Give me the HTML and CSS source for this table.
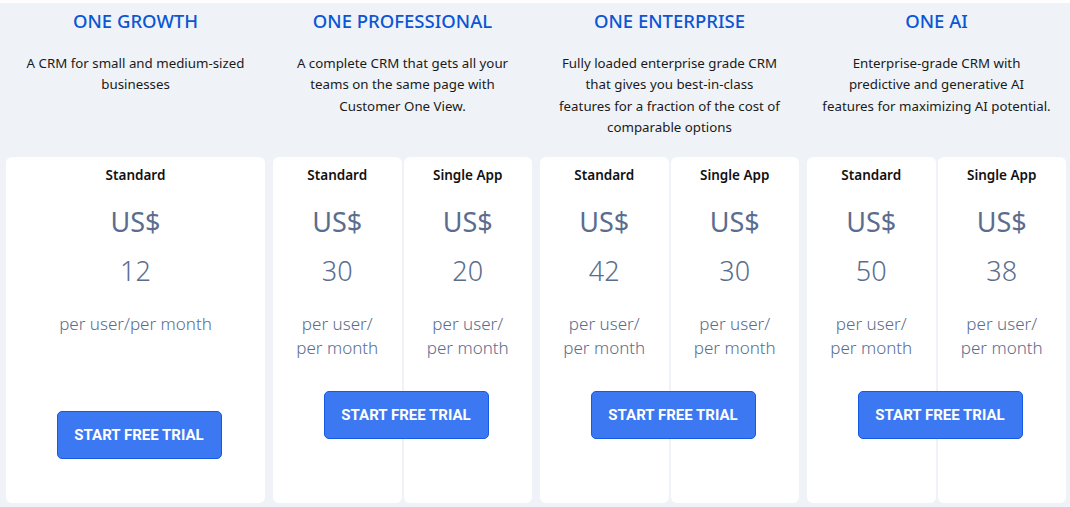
FILE: index.html
```html
<!DOCTYPE html>
<html>
<head>
<meta charset="utf-8">
<link rel="stylesheet" href="styles.css">
</head>
<body>
<main class="plans">
  <section class="plan">
    <div class="plan-head">
      <h2 class="plan-title">ONE GROWTH</h2>
      <p class="plan-desc">A CRM for small and medium-sized<br>businesses</p>
    </div>
    <div class="card card-single">
      <div class="tier">
        <div class="tier-name">Standard</div>
        <div class="currency">US$</div>
        <div class="amount">12</div>
        <div class="unit">per user/per month</div>
      </div>
      <button class="trial-btn">START FREE TRIAL</button>
    </div>
  </section>

  <section class="plan">
    <div class="plan-head">
      <h2 class="plan-title">ONE PROFESSIONAL</h2>
      <p class="plan-desc">A complete CRM that gets all your<br>teams on the same page with<br>Customer One View.</p>
    </div>
    <div class="card card-split">
      <div class="tier">
        <div class="tier-name">Standard</div>
        <div class="currency">US$</div>
        <div class="amount">30</div>
        <div class="unit">per user/<br>per month</div>
      </div>
      <div class="tier">
        <div class="tier-name">Single App</div>
        <div class="currency">US$</div>
        <div class="amount">20</div>
        <div class="unit">per user/<br>per month</div>
      </div>
      <button class="trial-btn">START FREE TRIAL</button>
    </div>
  </section>

  <section class="plan">
    <div class="plan-head">
      <h2 class="plan-title">ONE ENTERPRISE</h2>
      <p class="plan-desc">Fully loaded enterprise grade CRM<br>that gives you best-in-class<br>features for a fraction of the cost of<br>comparable options</p>
    </div>
    <div class="card card-split">
      <div class="tier">
        <div class="tier-name">Standard</div>
        <div class="currency">US$</div>
        <div class="amount">42</div>
        <div class="unit">per user/<br>per month</div>
      </div>
      <div class="tier">
        <div class="tier-name">Single App</div>
        <div class="currency">US$</div>
        <div class="amount">30</div>
        <div class="unit">per user/<br>per month</div>
      </div>
      <button class="trial-btn">START FREE TRIAL</button>
    </div>
  </section>

  <section class="plan">
    <div class="plan-head">
      <h2 class="plan-title">ONE AI</h2>
      <p class="plan-desc">Enterprise-grade CRM with<br>predictive and generative AI<br>features for maximizing AI potential.</p>
    </div>
    <div class="card card-split">
      <div class="tier">
        <div class="tier-name">Standard</div>
        <div class="currency">US$</div>
        <div class="amount">50</div>
        <div class="unit">per user/<br>per month</div>
      </div>
      <div class="tier">
        <div class="tier-name">Single App</div>
        <div class="currency">US$</div>
        <div class="amount">38</div>
        <div class="unit">per user/<br>per month</div>
      </div>
      <button class="trial-btn">START FREE TRIAL</button>
    </div>
  </section>
</main>
</body>
</html>
```

FILE: styles.css
```css
* { box-sizing: border-box; }

html, body {
  margin: 0;
  padding: 0;
}

body {
  background: #eff3f8;
  border-top: 3px solid #ffffff;
  font-family: "Noto Sans", "Open Sans", sans-serif;
  height: 507px;
  overflow: hidden;
}

.plans {
  display: grid;
  grid-template-columns: repeat(4, minmax(0, 1fr));
  column-gap: 8px;
  padding: 0 4px 0 6px;
}

.plan-head {
  height: 154px;
  padding-top: 5px;
  text-align: center;
  white-space: nowrap;
}

.plan-title {
  margin: 0;
  font-size: 18.5px;
  line-height: 26px;
  font-weight: 500;
  color: #0b56d4;
}

.plan-desc {
  margin: 19px 0 0;
  font-size: 13.3px;
  line-height: 21.3px;
  color: #1a1a1a;
}

.card {
  height: 346px;
  display: grid;
  column-gap: 2px;
}

.card-single { grid-template-columns: minmax(0, 1fr); }
.card-split { grid-template-columns: repeat(2, minmax(0, 1fr)); }

.tier {
  grid-row: 1;
  grid-column: 1;
  background: #ffffff;
  border-radius: 6px;
  text-align: center;
  padding-top: 8px;
  color: #5a6d8e;
}

.tier + .tier { grid-column: 2; }

.tier-name {
  font-size: 13.5px;
  line-height: 20px;
  font-weight: 600;
  color: #111111;
}

.currency {
  margin-top: 20px;
  font-size: 27px;
  line-height: 34px;
  font-weight: 400;
}

.amount {
  margin-top: 15px;
  font-size: 27px;
  line-height: 34px;
  font-weight: 300;
}

.unit {
  margin-top: 24px;
  font-size: 17px;
  line-height: 24px;
  font-weight: 300;
  white-space: nowrap;
}

.trial-btn {
  grid-row: 1;
  grid-column: 1 / -1;
  align-self: start;
  justify-self: center;
  width: 165px;
  height: 48px;
  margin-left: 7px;
  background: #3b78f2;
  border: 1px solid #1659e3;
  border-radius: 5px;
  color: #ffffff;
  font-family: Roboto, "Liberation Sans", sans-serif;
  font-weight: 700;
  font-size: 15px;
  letter-spacing: 0;
  cursor: pointer;
  position: relative;
  z-index: 1;
}

.card-single .trial-btn { margin-top: 254px; }
.card-split .trial-btn { margin-top: 234px; }
```
